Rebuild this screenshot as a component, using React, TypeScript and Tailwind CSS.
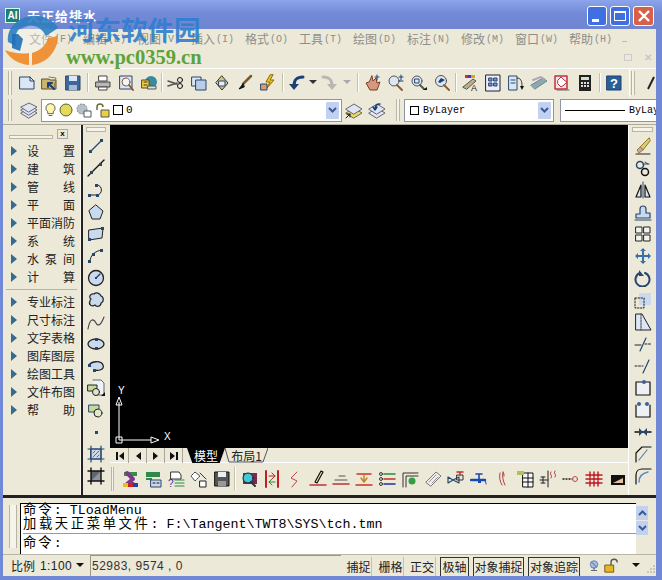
import React from "react";

const CJK = '"Noto Sans CJK SC","Liberation Sans",sans-serif';
const S = ({ children }: { children: React.ReactNode }) => (
  <svg width="18" height="18" viewBox="0 0 18 18" fill="none" strokeLinecap="round" strokeLinejoin="round">{children}</svg>
);
const N = "#26466e";
const L = "#c9d9ee";

const top1 = [
  <S><path d="M2 3h10l4 4v8H2z" fill="#dce7f5" stroke={N} /><path d="M12 3v4h4" stroke={N} /></S>,
  <S><path d="M1 5h7l1 1h6v9H1z" fill="#c9b66c" stroke="#5c5330" /><path d="M8 3l7 1-2 10" stroke="#8a7a44" /><path d="M13 15L7 9M7 9v4M7 9h4" stroke="#1d3f78" strokeWidth="2" /></S>,
  <S><path d="M2 2h14v14H2z" fill="#3f679f" stroke={N} /><path d="M5 2h8v5H5z" fill="#dce7f5" /><path d="M5 11h8v5H5z" fill="#a9b9cf" /></S>,
  <S><path d="M5 2h8v5H5z" fill="#fff" stroke="#444" /><path d="M2 8h14v5H2z" fill="#b8b8b8" stroke="#444" /><path d="M5 13h8v3H5z" fill="#fff" stroke="#444" /></S>,
  <S><path d="M3 2h12v13H3z" fill="#dce7f5" stroke={N} /><circle cx="9" cy="8" r="4" fill="#f4f4f4" stroke="#8a5a3c" /><path d="M12 11l4 5" stroke="#8a5a3c" strokeWidth="2" /></S>,
  <S><circle cx="11" cy="8" r="6" fill="#3a8a9e" /><path d="M2 6h7v8H2z" fill="#f0d040" stroke="#5a4a20" /><path d="M4 8h3M4 11h3" stroke="#333" /><path d="M8 12h8v3H8z" fill="#ddd" stroke="#555" /></S>,
  <S><path d="M1 7l9 3M1 12l9-3" stroke="#555" strokeWidth="1.5" /><circle cx="13" cy="6" r="2.5" stroke="#111" /><circle cx="13" cy="12" r="2.5" stroke="#111" /></S>,
  <S><path d="M2 3h9v9H2z" fill="#dce7f5" stroke={N} /><path d="M6 6h10v10H6z" fill="#b9cde8" stroke={N} /></S>,
  <S><path d="M9 2l6 7-6 7-6-7z" fill="#d2c186" stroke="#333" /><path d="M6 7h6v5H6z" fill="#e8eef8" stroke={N} /></S>,
  <S><path d="M15 2L7 10" stroke="#7a5a2a" strokeWidth="2.5" /><path d="M7 10l-4 5 5-2z" fill="#111" stroke="#111" /></S>,
  <S><path d="M11 1L7 8h4L8 14l7-8h-4l3-5z" fill="#f2c318" stroke="#8a6a10" /><path d="M2 10h6v6H2z" fill="#e09a70" stroke={N} /></S>,
];
const undo = <S><path d="M15 3C8 3 6 6 6 12" stroke="#1d3f78" strokeWidth="3" /><path d="M1 10h10l-5 6z" fill="#1d3f78" /></S>;
const redo = <S><path d="M3 3c7 0 9 3 9 9" stroke="#b8b8b0" strokeWidth="3" /><path d="M17 10H7l5 6z" fill="#b8b8b0" /></S>;
const top2 = [
  <S><path d="M8 2l1 5 3-3 1 5 3-1-3 8H6L2 9l3-1z" fill="#d49a80" stroke="#7a3a2a" /><path d="M13 1v5M11 3h4" stroke="#1d3f78" /></S>,
  <S><circle cx="7" cy="7" r="5" fill="#dce7f5" stroke="#555" /><path d="M10 11l5 5" stroke="#8a5a3c" strokeWidth="2" /><path d="M14 1v5M12 3h4M12 7h4" stroke="#1d3f78" /></S>,
  <S><circle cx="7" cy="7" r="5" fill="#dce7f5" stroke="#555" /><path d="M5 5h4v4H5z" stroke={N} /><path d="M10 11l4 4" stroke="#555" strokeWidth="2" /><path d="M13 16h4v-3z" fill="#111" /></S>,
  <S><circle cx="8" cy="7" r="5.5" fill="#dce7f5" stroke="#555" /><path d="M5 8l3-4 4 2-5 3z" fill="#1d3f78" /><path d="M11 11l5 5" stroke="#8a5a3c" strokeWidth="2" /></S>,
];
const top3 = [
  <S><path d="M4 1h3v3H4z" fill="#d03020" /><path d="M7 1h3v3H7z" fill="#5030c0" /><path d="M10 1h4v3h-4z" fill="#e0a020" /><path d="M2 13L12 5l3 2-9 8z" fill="#b9b090" stroke="#555" /><text x="10" y="17" fontSize="9" fill="#222" fontFamily="Liberation Sans">A</text></S>,
  <S><path d="M2 1h14v16H2z" fill="#eef" stroke="#222" /><path d="M5 4h3v3H5zM10 4h3v3h-3zM5 9h3v3H5zM10 9h3v3h-3z" fill="#7a99c8" stroke={N} /></S>,
  <S><path d="M2 2h8v14H2z" fill="#dce7f5" stroke={N} /><path d="M4 6h4M4 9h4" stroke={N} /><path d="M10 4c4 0 5 3 5 8" stroke="#333" /><path d="M13 12h4l-2 4z" fill="#111" /></S>,
  <S><path d="M1 11l12-7 4 3-12 8z" fill="#8ba8ae" stroke="#708a90" /><path d="M3 6l8-3 3 2" stroke="#aab" strokeWidth="2" /></S>,
  <S><path d="M2 2h12v13H2z" fill="#f6e7e7" stroke="#c03040" strokeWidth="1.5" /><path d="M5 6l3-3 3 3 3 2-3 3-3 2-3-3z" fill="#fff" stroke="#c03040" /><path d="M4 16h12" stroke="#666" /></S>,
  <S><path d="M3 1h12v16H3z" fill="#222" /><path d="M5 3h8v3H5z" fill="#cfe0cf" /><path d="M5 8h2v2H5zM8 8h2v2H8zM11 8h2v2h-2zM5 11h2v2H5zM8 11h2v2H8zM11 11h2v2h-2z" fill="#ddd" /></S>,
];
const help = <S><path d="M2 2h14v14H2z" fill="#2a5f96" stroke="#1d3f78" /><text x="5" y="14" fontSize="13" fontWeight="700" fill="#fff" fontFamily="Liberation Sans">?</text></S>;

const leftIcons = [
  <S><path d="M3 15L15 3" stroke={N} strokeWidth="1.2" /><rect x="2" y="13" width="3" height="3" fill={N} /><rect x="13" y="2" width="3" height="3" fill={N} /></S>,
  <S><path d="M1 17L17 1" stroke="#111" strokeWidth="1.3" /><rect x="3" y="12" width="3" height="3" fill={N} /><rect x="12" y="4" width="3" height="3" fill={N} /></S>,
  <S><path d="M2 14h8" stroke="#222" /><path d="M10 4c6 0 6 10 0 10" stroke="#222" /><rect x="1" y="13" width="3" height="3" fill={N} /><rect x="9" y="13" width="3" height="3" fill={N} /><rect x="8" y="3" width="3" height="3" fill={N} /></S>,
  <S><path d="M9 2l7 6-3 8H5L2 8z" fill={L} stroke="#222" /></S>,
  <S><path d="M2 5l14-2-1 10-13 2z" fill={L} stroke="#222" /><rect x="14" y="2" width="3" height="3" fill={N} /><rect x="1" y="13" width="3" height="3" fill={N} /></S>,
  <S><path d="M3 15C3 8 8 4 15 3" stroke="#222" /><rect x="1" y="13" width="3" height="3" fill={N} /><rect x="5" y="6" width="3" height="3" fill={N} /><rect x="13" y="2" width="3" height="3" fill={N} /></S>,
  <S><circle cx="9" cy="9" r="7.5" fill={L} stroke="#222" strokeWidth="1.3" /><path d="M9 9l4-4" stroke={N} strokeWidth="1.4" /><rect x="8" y="8" width="2" height="2" fill={N} /></S>,
  <S><path d="M4 8C1 6 4 2 7 3c2-2 6-1 7 2 3 1 3 6 0 7 0 4-5 4-6 2-3 2-7 0-5-4 0-1 0-1 1-2z" fill={L} stroke="#222" strokeWidth="1.2" /></S>,
  <S><path d="M1 16C3 4 7 6 9 10s5 2 8-6" stroke="#444" strokeWidth="1.1" /></S>,
  <S><ellipse cx="9" cy="9" rx="8" ry="5" fill={L} stroke="#222" strokeWidth="1.3" /><rect x="8" y="3" width="3" height="3" fill={N} /><rect x="8" y="12" width="3" height="3" fill={N} /></S>,
  <S><path d="M2 9C3 4 14 3 16 8s-5 6-9 5" fill={L} stroke="#222" strokeWidth="1.3" /><rect x="1" y="7" width="3" height="3" fill={N} /><rect x="6" y="12" width="3" height="3" fill={N} /></S>,
  <S><path d="M6 1h8l3 3v12H8" fill="#eef2fa" stroke="#666" /><path d="M1 6h9v6H1z" fill="#c6d89a" stroke="#222" /><circle cx="9" cy="13" r="3.5" fill="#dde6c8" stroke="#222" /><path d="M14 17h4v-4z" fill="#111" /></S>,
  <S><path d="M2 4h10v7H2z" fill="#c6d89a" stroke={N} /><circle cx="11" cy="12" r="4" fill="#e0e8d0" stroke="#222" /></S>,
  <S><rect x="8" y="8" width="3" height="3" fill={N} /></S>,
  <S><path d="M4 4h10v10H4z" fill="#cfd8e8" stroke={N} /><path d="M1 4h16M1 14h16M4 1v16M14 1v16" stroke={N} strokeWidth="1.2" /><path d="M6 12l6-6M6 8l2-2M10 12l2-2" stroke="#667" /></S>,
  <S><path d="M4 4h10v10H4z" fill="#5e6470" /><path d="M4 14L14 4v10z" fill="#8f959e" /><path d="M1 4h16M1 14h16M4 1v16M14 1v16" stroke="#111" strokeWidth="1.4" /></S>,
];

const rightIcons = [
  <S><path d="M15 1L6 10l3 3 7-9z" fill="#e2c86a" stroke="#8a7a30" /><path d="M6 10l-3 3 2 3 4-3z" fill="#d8a0a0" stroke="#884" /><path d="M2 17h14" stroke="#222" /></S>,
  <S><circle cx="6" cy="6" r="3.5" stroke={N} strokeWidth="1.5" /><circle cx="11" cy="13" r="3.5" stroke="#111" strokeWidth="1.5" /><path d="M9 5h6M11 3l3 2" stroke={N} /></S>,
  <S><path d="M7 4L2 16h5z" fill="#dce7f5" stroke="#111" strokeWidth="1.2" /><path d="M11 4l5 12h-5z" fill="#dce7f5" stroke="#111" strokeWidth="1.2" /><path d="M9 1v16" stroke={N} /></S>,
  <S><path d="M2 15v-4h4V6c0-4 6-4 6 0v4h4v5z" fill={L} stroke={N} strokeWidth="1.2" /><path d="M1 17h16" stroke={N} /></S>,
  <S><path d="M2 2h6v6H2zM10 2h6v6h-6zM2 10h6v6H2zM10 10h6v6h-6z" fill="#f3f3f0" stroke="#222" /></S>,
  <S><path d="M9 1l3 3h-2v4h4V6l3 3-3 3v-2h-4v4h2l-3 3-3-3h2v-4H4v2L1 9l3-3v2h4V4H6z" fill="#3a70aa" /></S>,
  <S><path d="M6 4a7 7 0 1 0 5 0" stroke={N} strokeWidth="2" /><path d="M5 1v6h5z" fill={N} /></S>,
  <S><path d="M5 2h12v12H5z" fill={L} /><path d="M1 7h9v10H1z" stroke="#222" strokeDasharray="1.5 1.5" /></S>,
  <S><path d="M2 1h6l9 16H2z" fill="#dce7f5" stroke="#222" /><path d="M7 1v16" stroke="#444" strokeDasharray="2 1" /></S>,
  <S><path d="M1 10h6" stroke="#223" /><path d="M6 16L12 3" stroke={N} strokeWidth="1.2" /><path d="M11 9h6" stroke="#223" strokeDasharray="2 1.5" /></S>,
  <S><path d="M1 9h8" stroke="#223" strokeDasharray="2 1.5" /><path d="M9 16l6-13" stroke={N} strokeWidth="1.2" /></S>,
  <S><path d="M2 3h14v13H2z" fill="#eef0f4" stroke="#111" strokeWidth="1.2" /><circle cx="10" cy="3" r="2" fill="#3a60a0" /></S>,
  <S><path d="M2 4v12h14V4" fill="#eef0f4" stroke="#111" strokeWidth="1.2" /><circle cx="5" cy="3" r="2" fill="#3a60a0" /><circle cx="13" cy="3" r="2" fill="#3a60a0" /></S>,
  <S><path d="M1 9h16" stroke="#111" strokeWidth="1.5" /><path d="M5 5l4 4-4 4zM13 5L9 9l4 4z" fill={N} /></S>,
  <S><path d="M2 17V8l6-6h9" stroke="#111" strokeWidth="1.2" /><path d="M5 15L13 5" stroke="#5a7ab0" strokeWidth="1.2" /></S>,
  <S><path d="M2 17V8c0-4 3-6 6-6h9" stroke="#111" strokeWidth="1.2" /><path d="M5 15c0-6 4-9 9-10" stroke="#5a8ac0" strokeWidth="1.5" /></S>,
];

const bot1 = [
  <S><path d="M3 2h13v4H3z" fill="#3a8a4a" /><path d="M6 3l6 6-6 5h6" stroke="#7a3a8a" strokeWidth="4" /><path d="M2 13h5v4H2z" fill="#e8c020" /><path d="M7 13h5v4H7z" fill="#d02020" /><path d="M12 13h5v4h-5z" fill="#2040b0" /></S>,
  <S><path d="M2 2h14v5H2z" fill="#2f8a4a" /><path d="M2 8h6v2H2z" fill="#2f8a4a" /><path d="M7 10h10v7H7z" fill="#cfd8e8" stroke={N} /><path d="M9 13h2M13 13h2" stroke="#111" /></S>,
  <S><path d="M4 2h8l2 3v4H4z" fill="#fff" stroke="#333" /><path d="M8 10h9M8 13h9M8 16h9" stroke="#2f8a4a" strokeWidth="1.2" /><text x="1" y="17" fontSize="10" fill="#30309a" fontFamily="Liberation Sans">?</text></S>,
  <S><path d="M5 2l5 4-5 5-4-5z" fill="#fff" stroke="#444" strokeDasharray="2 1" /><path d="M10 3l6 6" stroke="#333" /><path d="M10 11h6v6h-6z" fill="#fff" stroke="#222" /></S>,
  <S><path d="M2 2h14v14H2z" fill="#555" stroke="#111" /><path d="M5 2h8v5H5z" fill="#eee" /><path d="M5 11h8v5H5z" fill="#999" /></S>,
];
const bot2 = [
  <S><path d="M3 3h14v11H3z" fill="#7a2a4a" /><circle cx="8" cy="8" r="5" fill="#40c8d8" stroke="#123" /><path d="M11 12l4 4" stroke="#333" strokeWidth="2" /></S>,
  <S><path d="M3 1v16M15 1v16" stroke="#c02020" strokeWidth="2" /><path d="M6 6h6M9 3l3 3-3 3" stroke="#c02020" /><path d="M12 12H6M9 9l-3 3 3 3" stroke="#2a8a3a" /></S>,
  <S><path d="M11 2L5 8l6 3-5 6" stroke="#c04050" /></S>,
  <S><path d="M1 15h16" stroke="#c03030" strokeWidth="1.5" /><path d="M12 1L6 12l2 1 6-11z" fill="#f0e8a0" stroke="#111" strokeWidth="1.2" /></S>,
  <S><path d="M7 6h6M3 10h12" stroke="#555" strokeWidth="1.2" /><path d="M1 14h16" stroke="#c03030" strokeWidth="1.5" /></S>,
  <S><path d="M2 4h14M1 15h16" stroke="#d03020" strokeWidth="1.4" /><path d="M9 5v6M6 8l3 4 3-4" stroke="#c08020" strokeWidth="1.4" /></S>,
  <S><path d="M6 4h11" stroke="#2a8a3a" strokeWidth="1.5" /><path d="M6 9h11" stroke="#c03030" strokeWidth="1.5" /><path d="M6 14h11" stroke="#2030a0" strokeWidth="1.5" /><circle cx="3" cy="4" r="1.5" stroke="#333" /><circle cx="3" cy="9" r="1.5" stroke="#333" /><circle cx="3" cy="14" r="1.5" stroke="#333" /></S>,
  <S><path d="M2 17V3h15M5 17V6h12" stroke="#333" /><circle cx="11" cy="11" r="3.5" fill="#30a040" /></S>,
  <S><path d="M2 12L12 2l5 4-10 10z" fill="#eee" stroke="#777" /><path d="M5 12l7-7M8 13l6-6" stroke="#999" /></S>,
  <S><path d="M1 7v6l5-3zM12 7v6l-6-3z" stroke={N} strokeWidth="1.2" /><path d="M10 5h6v5h-6z" stroke="#333" /><path d="M13 2v3M10 2h6" stroke="#c03030" strokeWidth="1.5" /></S>,
  <S><path d="M1 10h14" stroke="#1848b8" strokeWidth="2.5" /><path d="M9 4v6M6 4h6" stroke="#1848b8" strokeWidth="1.6" /><path d="M8 11h3v2H8z" fill="#1848b8" /><path d="M14 10c2 1 2 3 2 4" stroke="#1848b8" /></S>,
  <S><path d="M7 3c-1 4 0 9 2 12M10 2c-1 4 0 9 2 13" stroke="#b04040" /><path d="M10 2c1 1 1 3 1 4" stroke="#b04040" /></S>,
  <S><path d="M7 3h10v14H7z" fill="#f8f8f8" stroke="#111" /><path d="M7 8h10M7 12h10M12 3v14" stroke="#111" /><path d="M1 1h7v4H1z" fill="#b0c060" /></S>,
  <S><path d="M1 10h8M9 1v16M2 7h4M4 7v6M2 13h4" stroke="#222" /><path d="M12 2c-2 3 2 3 0 6M16 1c-2 3 2 3 0 6" stroke="#b03030" /></S>,
  <S><path d="M1 9h1M4 9h1M7 9h1" stroke="#222" strokeWidth="1.5" /><circle cx="13" cy="9" r="2.5" stroke="#b05050" /><path d="M9 9h2" stroke="#b05050" /></S>,
  <S><path d="M2 3h14v12H2z" fill="#f6e0e0" /><path d="M1 5h16M1 9h16M1 13h16M5 2v14M9 2v14M13 2v14" stroke="#b81818" strokeWidth="1.4" strokeDasharray="2 1" /></S>,
  <S><path d="M3 5h14v10H3z" fill="#111" /><path d="M5 13l10-5v5z" fill="#e8c0a8" /></S>,
];

const grip = "w-[4px] border-x border-[#b8b5a2] bg-[#f6f4ea]";
const Sep = ({ w = 6 }: { w?: number }) => (
  <div className="flex justify-center self-stretch py-[4px]" style={{ width: w }}>
    <div className="w-[2px] border-r border-white bg-[#c4c1ae]" />
  </div>
);
const Slot = ({ children }: { children: React.ReactNode }) => (
  <div className="flex h-[22px] w-[23px] shrink-0 items-center justify-center">{children}</div>
);
const Down = ({ c = "#333" }: { c?: string }) => (
  <svg width="9" height="5" viewBox="0 0 9 5" className="block"><path d="M0 0h8L4 4z" fill={c} /></svg>
);
const ComboBtn = () => (
  <div className="flex h-[19px] w-[15px] shrink-0 items-center justify-center rounded-[2px] border border-white bg-[#c3d1f0]">
    <svg width="9" height="7" viewBox="0 0 9 7"><path d="M1 1l3.5 3.5L8 1" stroke="#3c5a92" strokeWidth="2" fill="none" /></svg>
  </div>
);
const Combo = ({ w, children }: { w: number; children: React.ReactNode }) => (
  <div className="flex h-[23px] items-center justify-between border border-[#8f94a5] bg-white pr-[1px]" style={{ width: w }}>
    {children}
  </div>
);

const menu = [["文件", "(F)"], ["编辑", "(E)"], ["视图", "(V)"], ["插入", "(I)"], ["格式", "(O)"], ["工具", "(T)"], ["绘图", "(D)"], ["标注", "(N)"], ["修改", "(M)"], ["窗口", "(W)"], ["帮助", "(H)"]];
const g1 = [["设", "置"], ["建", "筑"], ["管", "线"], ["平", "面"], ["平面消防"], ["系", "统"], ["水", "泵", "间"], ["计", "算"]];
const g2 = [["专业标注"], ["尺寸标注"], ["文字表格"], ["图库图层"], ["绘图工具"], ["文件布图"], ["帮", "助"]];

const Item = ({ parts }: { parts: string[] }) => (
  <div className="flex h-[18px] items-center pl-[8px]">
    <svg width="6" height="10" viewBox="0 0 6 10" className="shrink-0"><path d="M0 0l6 5-6 5z" fill="#376a8e" /></svg>
    <div className="ml-[10px] flex w-[48px] justify-between text-[12px] leading-[18px] text-[#222]">
      {parts.map((p) => <span key={p}>{p}</span>)}
    </div>
  </div>
);

const NavBtn = ({ d }: { d: string }) => (
  <div className="flex h-[15px] w-[18px] items-center justify-center border-r border-[#aaa79a]">
    <svg width="10" height="10" viewBox="0 0 10 10"><path d={d} fill="#111" /></svg>
  </div>
);

const StatusBtn = ({ t, on, w, ml }: { t: string; on?: boolean; w: number; ml: number }) => (
  <div
    className={`flex h-[19px] shrink-0 items-center justify-center whitespace-nowrap text-[12px] text-[#222] ${on ? "border-l border-t border-r border-l-[#333] border-t-[#333] border-r-[#333]" : "border-r border-r-[#c4c1ae]"}`}
    style={{ width: w, marginLeft: ml }}
  >
    {t}
  </div>
);

export default function App() {
  return (
    <div className="relative flex h-[580px] w-[662px] flex-col overflow-hidden bg-[#7088d6]" style={{ fontFamily: CJK }}>
      {/* Title */}
      <div className="flex h-[29px] shrink-0 items-center bg-gradient-to-b from-[#8ba4ea] via-[#7189d6] to-[#6f85d0] pl-[5px] pr-[8px] pt-[2px]">
        <div className="flex h-[15px] w-[15px] items-center justify-center border border-[#cfe] bg-[#1f7f78] text-[10px] font-bold leading-none text-white" style={{ fontFamily: "Liberation Sans" }}>AI</div>
        <span className="ml-[7px] text-[13px] font-bold tracking-[1px] text-white">天正给排水</span>
        <div className="ml-auto flex gap-[3px]">
          <div className="flex h-[20px] w-[20px] items-end justify-start rounded-[3px] border border-white bg-[#3f6fe0] pb-[3px] pl-[4px]"><div className="h-[3px] w-[7px] bg-white" /></div>
          <div className="flex h-[20px] w-[20px] items-center justify-center rounded-[3px] border border-white bg-[#3f6fe0]"><div className="h-[10px] w-[12px] border border-t-[2px] border-white" /></div>
          <div className="flex h-[20px] w-[21px] items-center justify-center rounded-[3px] border border-white bg-[#d8604a]">
            <svg width="12" height="12" viewBox="0 0 12 12"><path d="M1 1l10 10M11 1L1 11" stroke="#fff" strokeWidth="2.4" /></svg>
          </div>
        </div>
      </div>

      {/* Body */}
      <div className="mb-[4px] ml-[3px] mr-[6px] flex min-h-0 flex-1 flex-col bg-[#ece9d8]">
        {/* Menu */}
        <div className="flex h-[39px] shrink-0 items-start pl-[26px] pt-[1px] text-[#8e8e8a]">
          {menu.map(([a, b]) => (
            <div key={a} className="flex h-[18px] w-[54px] shrink-0 items-center text-[12px]">
              {a}<span className="ml-[1px] text-[10px]" style={{ fontFamily: "Liberation Mono" }}>{b}</span>
            </div>
          ))}
          <div className="relative flex-1">
            <div className="absolute right-[29px] top-[11px] h-[1px] w-[5px] bg-[#bbb]" />
            <div className="absolute right-[24px] top-[24px] h-[7px] w-[8px] border border-[#ccc]" />
            <div className="absolute right-[4px] top-[22px] text-[10px] font-bold leading-[10px] text-[#c8c8c8]">✕</div>
          </div>
        </div>

        {/* Toolbar 1 */}
        <div className="flex h-[28px] shrink-0 items-center border-t border-white bg-[#ece9d8] pl-[5px]">
          <div className={`${grip} h-[24px]`} /><div className="w-[4px]" />
          {top1.slice(0, 3).map((x, i) => <Slot key={i}>{x}</Slot>)}
          <Sep w={7} />
          {top1.slice(3, 6).map((x, i) => <Slot key={i}>{x}</Slot>)}
          <Sep w={5} />
          {top1.slice(6).map((x, i) => <Slot key={i}>{x}</Slot>)}
          <Sep />
          <Slot>{undo}</Slot>
          <div className="flex w-[10px] justify-center"><Down /></div>
          <Slot>{redo}</Slot>
          <div className="flex w-[14px] justify-center"><Down c="#aaa" /></div>
          <Sep w={8} />
          {top2.map((x, i) => <Slot key={i}>{x}</Slot>)}
          <Sep />
          {top3.map((x, i) => <Slot key={i}>{x}</Slot>)}
          <Sep />
          <Slot>{help}</Slot>
          <div className="w-[4px]" />
          <div className="h-[28px] w-[1px] bg-white" />
          <div className={`${grip} ml-[1px] h-[24px]`} />
          <svg width="10" height="18" viewBox="0 0 10 18" className="ml-[11px] shrink-0"><path d="M8 3L2 15" stroke="#222" strokeWidth="2" /></svg>
        </div>

        {/* Toolbar 2 */}
        <div className="flex h-[29px] shrink-0 items-center border-b border-[#aeab9a] pl-[5px]">
          <div className={`${grip} h-[22px]`} /><div className="w-[5px]" />
          <Slot><S><path d="M1 12l8-5 8 5-8 5z" fill="#dfe6f2" stroke="#667" /><path d="M1 9l8-5 8 5-8 5z" fill="#dfe6f2" stroke="#667" /><path d="M1 6l8-4 8 4-8 5z" fill="#dfe6f2" stroke="#667" /></S></Slot>
          <div className="w-[1px]" />
          <Combo w={301}>
            <div className="flex items-center gap-[3px] pl-[3px]">
              <svg width="11" height="16" viewBox="0 0 12 16"><path d="M6 1a5 5 0 0 1 3 9v2H3v-2a5 5 0 0 1 3-9z" fill="#fff6a8" stroke="#555" /><path d="M4 14h4" stroke="#555" /></svg>
              <svg width="14" height="14" viewBox="0 0 14 14"><circle cx="7" cy="7" r="6" fill="#e7d85a" stroke="#50623a" /></svg>
              <svg width="16" height="15" viewBox="0 0 16 15"><circle cx="6" cy="6" r="5" fill="#b6c0c6" stroke="#7b8a90" strokeDasharray="2 1" /><path d="M8 8h7v6H8z" fill="#fff" stroke="#556" /></svg>
              <svg width="15" height="15" viewBox="0 0 15 15"><path d="M2 7V4a3 3 0 0 1 6 0" stroke="#6a6a30" fill="none" strokeWidth="1.5" /><path d="M6 7h8v7H6z" fill="#e8d040" stroke="#555" /></svg>
              <div className="h-[10px] w-[10px] border border-black" />
              <span className="text-[11px] text-black" style={{ fontFamily: "Liberation Mono" }}>0</span>
            </div>
            <ComboBtn />
          </Combo>
          <Slot><S><path d="M1 12l8-5 8 5-8 5z" fill="#e6d860" stroke="#666" /><path d="M1 8l8-5 8 5-8 5z" fill="#dfe6f2" stroke="#667" /><path d="M1 17l4-4M2 13h3v3" stroke="#111" /></S></Slot>
          <Slot><S><path d="M1 12l8-5 8 5-8 5z" fill="#dfe6f2" stroke="#667" /><path d="M1 8l8-5 8 5-8 5z" fill="#dfe6f2" stroke="#667" /><path d="M12 3c-4 0-5 2-5 5M5 6l2 3 2-3" stroke="#1d3f78" strokeWidth="1.4" /></S></Slot>
          <div className="w-[8px]" />
          <div className={`${grip} h-[22px]`} />
          <div className="w-[4px]" />
          <Combo w={150}>
            <div className="flex items-center gap-[4px] pl-[5px]">
              <div className="h-[9px] w-[9px] border border-black" />
              <span className="text-[10px] text-black" style={{ fontFamily: "Liberation Mono" }}>ByLayer</span>
            </div>
            <ComboBtn />
          </Combo>
          <div className="w-[6px]" />
          <div className="flex h-[23px] flex-1 items-center overflow-hidden whitespace-nowrap border-y border-l border-[#8f94a5] bg-white pl-[4px]">
            <div className="h-[1px] w-[60px] shrink-0 bg-black" />
            <span className="ml-[4px] text-[10px] text-black" style={{ fontFamily: "Liberation Mono" }}>ByLay</span>
          </div>
        </div>

        {/* Main */}
        <div className="flex h-[370px] shrink-0">
          <div className="flex w-[78px] shrink-0 flex-col border-r border-[#f8f6ee]">
            <div className="flex h-[17px] shrink-0 items-end pb-[3px] pl-[6px]">
              <div className="h-[4px] w-[44px] border border-[#b8b5a2] bg-[#f6f4ea]" />
              <div className="ml-[4px] flex h-[10px] w-[11px] items-center justify-center border border-[#aaa] text-[8px] font-bold leading-none text-black" style={{ fontFamily: "Liberation Sans" }}>x</div>
            </div>
            {g1.map((p) => <Item key={p.join()} parts={p} />)}
            <div className="mx-[3px] my-[3px] h-[1px] bg-[#b8b5a2]" />
            {g2.map((p) => <Item key={p.join()} parts={p} />)}
          </div>
          <div className="w-[2px] shrink-0 bg-[#222]" />
          <div className="flex w-[25px] shrink-0 flex-col items-center">
            <div className="mt-[2px] h-[5px] w-[20px] shrink-0 border border-[#b8b5a2] bg-[#f6f4ea]" />
            <div className="h-[3px]" />
            {leftIcons.map((x, i) => <div key={i} className="flex h-[22px] items-center justify-center">{x}</div>)}
          </div>
          <div className="flex min-w-0 flex-1 flex-col pl-[2px]">
            <div className="relative h-[323px] shrink-0 bg-black">
              <svg width="60" height="60" viewBox="0 0 60 60" className="absolute bottom-[1px] left-0">
                <path d="M9 53V15M9 53h32" stroke="#fff" />
                <path d="M6 50h6v6H6z" stroke="#fff" fill="none" />
                <path d="M9 10l-3 8h6zM41 50v6l8-3z" stroke="#fff" fill="none" />
              </svg>
              <span className="absolute bottom-[52px] left-[8px] text-[10px] leading-none text-white" style={{ fontFamily: "Liberation Sans" }}>Y</span>
              <span className="absolute bottom-[6px] left-[54px] text-[10px] leading-none text-white" style={{ fontFamily: "Liberation Sans" }}>X</span>
            </div>
            <div className="flex h-[15px] shrink-0 items-start border-b border-white pl-[1px] text-[12px]">
              <NavBtn d="M1 1h2v8H1zM9 1v8L4 5z" />
              <NavBtn d="M8 1v8L3 5z" />
              <NavBtn d="M2 1v8l5-4z" />
              <NavBtn d="M1 1v8l5-4zM7 1h2v8H7z" />
              <div className="ml-[4px] flex h-[15px] w-[38px] items-center justify-center bg-black text-white [clip-path:polygon(0_0,100%_0,86%_100%,14%_100%)]"><span>模型</span></div>
              <div className="relative flex h-[15px] w-[43px] items-center justify-center text-[#222]">
                <svg width="43" height="15" viewBox="0 0 43 15" className="absolute inset-0"><path d="M0 0l4 14h34l5-14" fill="none" stroke="#555" /></svg>
                <span className="relative">布局1</span>
              </div>
            </div>
            <div className="flex h-[32px] shrink-0 items-center pl-[1px]">
              <div className={`${grip} h-[24px]`} />
              <div className="w-[7px]" />
              {bot1.map((x, i) => <Slot key={i}>{x}</Slot>)}
              <Sep w={5} />
              {bot2.map((x, i) => <Slot key={i}>{x}</Slot>)}
            </div>
          </div>
          <div className="flex w-[28px] shrink-0 flex-col items-center border-l border-white">
            <div className="mt-[2px] h-[5px] w-[21px] shrink-0 border border-[#b8b5a2] bg-[#f6f4ea]" />
            <div className="h-[3px]" />
            {rightIcons.map((x, i) => <div key={i} className="flex h-[22px] items-center justify-center">{x}</div>)}
          </div>
        </div>

        {/* Command */}
        <div className="flex h-[59px] shrink-0 items-stretch border-t-[3px] border-t-[#222] pl-[6px] pt-[5px]">
          <div className={`${grip} mb-[6px] mt-[2px] w-[8px]`} />
          <div className="w-[3px]" />
          <div className="flex min-w-0 flex-1 flex-col border-l border-t border-black bg-white pl-[2px] text-[13.33px] text-black" style={{ fontFamily: '"Liberation Mono","Noto Sans CJK SC",monospace' }}>
            <div className="h-[14px] whitespace-pre leading-[14px]"><span className="tracking-[2px]">命令</span>: TLoadMenu</div>
            <div className="h-[13px] whitespace-pre leading-[13px]"><span className="tracking-[2.6px]">加载天正菜单文件</span>: F:\Tangent\TWT8\SYS\tch.tmn</div>
            <div className="mt-[2px] h-[1px] bg-[#999]" />
            <div className="flex-1 whitespace-pre pt-[3px] leading-[13px]"><span className="tracking-[2px]">命令</span>:</div>
          </div>
          <div className="mr-[8px] flex w-[12px] shrink-0 flex-col gap-[1px] pb-[17px] pt-[3px]">
            <div className="flex h-[14px] items-center justify-center bg-[#c3d1f0]"><svg width="9" height="7" viewBox="0 0 9 7"><path d="M1 5l3.5-3.5L8 5" stroke="#3c5a92" strokeWidth="2" fill="none" /></svg></div>
            <div className="flex h-[14px] items-center justify-center bg-[#c3d1f0]"><svg width="9" height="7" viewBox="0 0 9 7"><path d="M1 1l3.5 3.5L8 1" stroke="#3c5a92" strokeWidth="2" fill="none" /></svg></div>
          </div>
        </div>

        {/* Status */}
        <div className="flex h-[22px] shrink-0 items-center whitespace-nowrap border-t border-[#b8b5a2]">
          <span className="ml-[8px] w-[24px] shrink-0 text-[12px] text-[#222]">比例</span>
          <span className="ml-[5px] w-[30px] shrink-0 text-[12px] tracking-[0.4px] text-[#222]" style={{ fontFamily: "Liberation Sans" }}>1:100</span>
          <div className="ml-[6px] shrink-0"><Down c="#111" /></div>
          <div className="ml-[5px] flex h-[21px] w-[251px] shrink-0 items-center border-l border-t border-[#9a9788] pl-[1px] text-[12px] tracking-[0.5px] whitespace-pre text-[#333]" style={{ fontFamily: "Liberation Sans" }}>52983, 9574 , 0</div>
          <div className="flex shrink-0 items-center self-end">
            <StatusBtn t="捕捉" w={26} ml={5} />
            <StatusBtn t="栅格" w={26} ml={6} />
            <StatusBtn t="正交" w={27} ml={5} />
            <StatusBtn t="极轴" on w={29} ml={4} />
            <StatusBtn t="对象捕捉" on w={51} ml={4} />
            <StatusBtn t="对象追踪" on w={52} ml={4} />
          </div>
          <svg width="12" height="16" viewBox="0 0 16 16" className="ml-[8px] shrink-0"><circle cx="8" cy="6" r="5" fill="#a9bfe8" stroke="#4a6aa8" /><path d="M4 14h8M8 10v4M5 3l6 6" stroke="#345" /></svg>
          <svg width="16" height="17" viewBox="0 0 18 17" className="ml-[3px] shrink-0"><path d="M9 8V5a3.5 3.5 0 0 1 7 0" stroke="#555" strokeWidth="1.5" fill="none" /><path d="M2 8h10v8H2z" fill="#e4b820" stroke="#6a5410" /></svg>
          <div className="ml-[13px] shrink-0"><Down c="#111" /></div>
          <svg width="11" height="11" viewBox="0 0 11 11" className="ml-[4px] mt-[6px] shrink-0"><path d="M8 2h2v2H8zM5 5h2v2H5zM8 5h2v2H8zM2 8h2v2H2zM5 8h2v2H5zM8 8h2v2H8z" fill="#c9c6b4" /></svg>
        </div>
      </div>

      {/* Watermark overlay */}
      <svg width="66" height="60" viewBox="0 0 66 60" className="absolute left-[2px] top-[10px]">
        <ellipse cx="34" cy="33" rx="22" ry="18" fill="#fff" opacity=".35" />
        <path d="M6 32C4 16 20 4 36 6c10 1 18 7 20 12L44 26C40 18 32 14 24 16 14 18 12 26 14 36z" fill="#2e7ec0" opacity=".9" />
        <path d="M3 40c10 4 20 4 24 3v12C16 54 7 48 3 40z" fill="#f08a2a" opacity=".92" />
        <path d="M30 43c8-2 14-8 16-15l10-2c0 14-10 27-26 29z" fill="#f08a2a" opacity=".92" />
        <path d="M10 24h6l5 5-3 12-8-3z" fill="#1f6fb8" opacity=".9" />
      </svg>
      <div className="absolute left-[68px] top-[11px] text-[26.5px] font-bold leading-[36px] text-[#2e7fd0] opacity-90">河东软件园</div>
      <div className="absolute left-[66px] top-[46px] text-[20.5px] font-bold leading-[22px] text-[#5da33a]" style={{ fontFamily: '"Liberation Serif",serif' }}>www.pc0359.cn</div>
    </div>
  );
}
